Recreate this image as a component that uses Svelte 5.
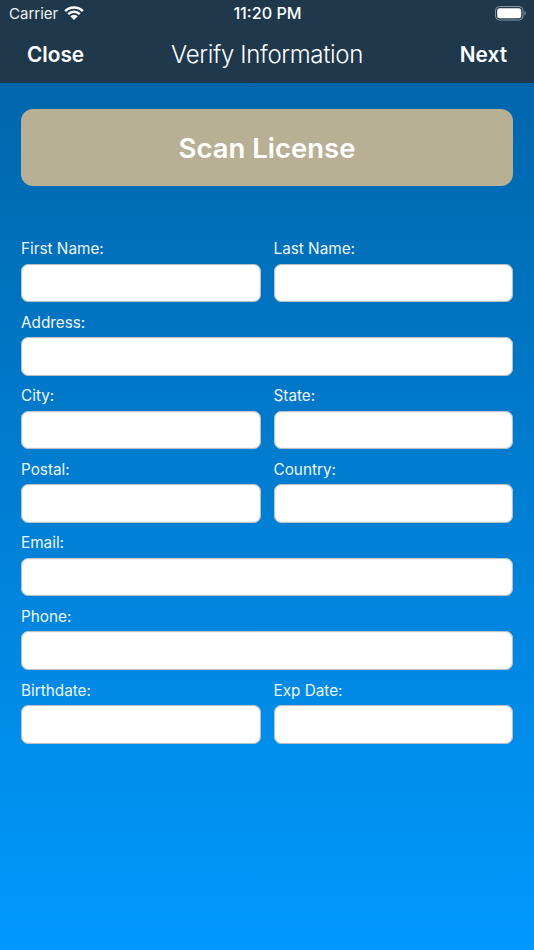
<script>
  const rows = [
    [{ label: 'First Name:' }, { label: 'Last Name:' }],
    [{ label: 'Address:' }],
    [{ label: 'City:' }, { label: 'State:' }],
    [{ label: 'Postal:' }, { label: 'Country:' }],
    [{ label: 'Email:' }],
    [{ label: 'Phone:' }],
    [{ label: 'Birthdate:' }, { label: 'Exp Date:' }],
  ];
</script>

<div class="screen">
  <header class="top">
    <div class="status">
      <div class="carrier">
        <span>Carrier</span>
        <svg class="wifi" width="20" height="15" viewBox="0 0 20 15">
          <path d="M1.160 5.160a12.500 12.500 0 0 1 17.680 0" fill="none" stroke="#fff" stroke-width="2.600" />
          <path d="M4.200 8.200a8.200 8.200 0 0 1 11.600 0" fill="none" stroke="#fff" stroke-width="2.600" />
          <path d="M10 14L6.250 10.250a5.300 5.300 0 0 1 7.500 0z" fill="#fff" />
        </svg>
      </div>
      <div class="time">11:20 PM</div>
      <svg class="battery" width="31" height="15" viewBox="0 0 31 15">
        <rect x="0.5" y="0.5" width="27.500" height="13.500" rx="4" fill="none" stroke="#8b98a3" />
        <rect x="2.200" y="2.200" width="24" height="10" rx="2.500" fill="#fff" />
        <path d="M29.500 5v4.500c.8-.3 1.300-1.200 1.300-2.200s-.5-2-1.300-2.300z" fill="#8b98a3" />
      </svg>
    </div>
    <nav class="nav">
      <span class="nav-btn">Close</span>
      <span class="title">Verify Information</span>
      <span class="nav-btn next">Next</span>
    </nav>
  </header>

  <main class="body">
    <button class="scan">Scan License</button>

    <form class="fields">
      {#each rows as row}
        <div class="row">
          {#each row as field}
            <label class="field">
              <span>{field.label}</span>
              <input type="text" />
            </label>
          {/each}
        </div>
      {/each}
    </form>
  </main>
</div>

<style>
  :global(body) {
    margin: 0;
  }

  .screen {
    width: 534px;
    height: 950px;
    display: flex;
    flex-direction: column;
    overflow: hidden;
    font-family: Inter, "Liberation Sans", sans-serif;
    color: #fff;
  }

  .top {
    height: 83px;
    background-color: #1f384c;
    flex-shrink: 0;
  }

  .status {
    box-sizing: border-box;
    height: 28px;
    padding: 0 8px 2px 9px;
    display: grid;
    grid-template-columns: 1fr auto 1fr;
    align-items: center;
  }

  .carrier {
    display: flex;
    align-items: center;
    gap: 6px;
    font-size: 15px;
    color: #f2f4f6;
  }

  .time {
    font-size: 16.200px;
    font-weight: 500;
  }

  .battery {
    justify-self: end;
  }

  .nav {
    height: 53px;
    padding: 0 27px;
    display: grid;
    grid-template-columns: 1fr auto 1fr;
    align-items: center;
  }

  .nav-btn {
    font-size: 20.800px;
    font-weight: 600;
  }

  .next {
    justify-self: end;
  }

  .title {
    font-size: 24px;
    font-weight: 300;
    letter-spacing: -0.350px;
  }

  .body {
    flex: 1;
    padding: 26px 21px 0;
    background: linear-gradient(180deg, #0066ab 0%, #0099ff 100%);
  }

  .scan {
    display: block;
    width: 100%;
    height: 77px;
    border: none;
    border-radius: 12px;
    background-color: #b7b094;
    color: #fff;
    font-family: inherit;
    font-size: 27.500px;
    font-weight: 600;
  }

  .fields {
    margin-top: 53px;
    display: flex;
    flex-direction: column;
    gap: 10.600px;
  }

  .row {
    display: flex;
    gap: 13px;
  }

  .field {
    flex: 1;
    display: flex;
    flex-direction: column;
    gap: 4.500px;
  }

  .field span {
    font-size: 15.300px;
    line-height: 20px;
    color: #f0f6fb;
  }

  .field input {
    box-sizing: border-box;
    height: 38.500px;
    width: 100%;
    border: 1px solid #bcc1c6;
    border-radius: 7px;
    background-color: #fff;
    box-shadow: inset 0 0 1px #9aa0a6;
    padding: 0 8px;
  }
</style>
